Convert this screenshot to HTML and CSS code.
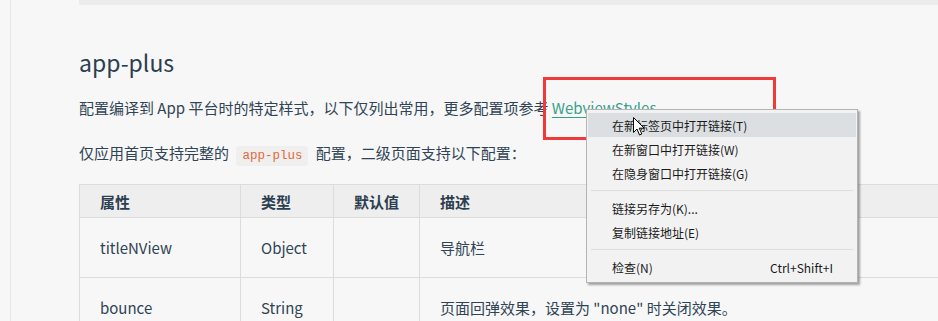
FILE: index.html
```html
<!DOCTYPE html>
<html>

<head>
  <meta charset="UTF-8">
  <meta name="viewport" content="width=device-width, initial-scale=1" />
  <title>app-plus</title>
  <link rel="stylesheet" href="styles.css">
</head>

<body>
  <div id="page">
    <aside id="sidebar"></aside>

    <main id="content">
      <div class="code-end"></div>

      <h2>app-plus</h2>

      <p>
        配置编译到 App 平台时的特定样式，以下仅列出常用，更多配置项参考
        <a href="#">WebviewStyles</a>。
      </p>

      <p>
        仅应用首页支持完整的 <code>app-plus</code> 配置，二级页面支持以下配置：
      </p>

      <table>
        <thead>
          <tr>
            <th class="col-name">属性</th>
            <th class="col-type">类型</th>
            <th class="col-default">默认值</th>
            <th>描述</th>
          </tr>
        </thead>
        <tbody>
          <tr>
            <td>titleNView</td>
            <td>Object</td>
            <td></td>
            <td>导航栏</td>
          </tr>
          <tr>
            <td>bounce</td>
            <td>String</td>
            <td></td>
            <td>页面回弹效果，设置为 "none" 时关闭效果。</td>
          </tr>
        </tbody>
      </table>
    </main>
  </div>

  <!-- highlight box drawn over the link -->
  <div id="highlight"></div>

  <!-- browser context menu -->
  <ul id="context-menu">
    <li class="hover">在新标签页中打开链接(T)</li>
    <li>在新窗口中打开链接(W)</li>
    <li>在隐身窗口中打开链接(G)</li>
    <li class="separator"></li>
    <li>链接另存为(K)...</li>
    <li>复制链接地址(E)</li>
    <li class="separator"></li>
    <li><span>检查(N)</span><span class="shortcut">Ctrl+Shift+I</span></li>
  </ul>

  <svg id="cursor" viewBox="0 0 12 19" xmlns="http://www.w3.org/2000/svg">
    <path d="M0.5,0.5 L0.5,15.5 L4,12 L6.5,18 L8.8,17 L6.3,11.2 L11.2,11.2 Z"
      fill="#fff" stroke="#000" stroke-width="1" stroke-linejoin="round" />
  </svg>
</body>

</html>
```

FILE: styles.css
```css
:root {
  --color-bg: #f7f7f7;
  --color-text: #304455;
  --color-heading: #2c3e50;
  --color-link: #3a9f8a;
  --color-code: #e4683a;
  --color-border: #dcdcdc;
  --color-th-bg: #eeeeee;
  --color-menu-bg: #f2f2f2;
  --color-menu-hover: #dcdfe1;
  --color-red: #f03a3a;
}

* {
  margin: 0;
  padding: 0;
  box-sizing: border-box;
}

html,
body {
  height: 100%;
}

body {
  overflow: hidden;
  background-color: var(--color-bg);
  color: var(--color-text);
  font-family: "Noto Sans CJK SC", "Noto Sans", sans-serif;
}

#page {
  display: flex;
  height: 100%;
}

#sidebar {
  flex-shrink: 0;
  width: 11px;
  border-right: 1px solid #e6e6e6;
}

#content {
  flex-shrink: 0;
  width: 960px;
  padding-left: 68px;

  .code-end {
    height: 5px;
    background-color: #ececec;
  }

  h2 {
    margin-top: 42px;
    font-size: 23px;
    line-height: 30px;
    font-weight: 400;
    color: var(--color-heading);
  }

  p {
    margin-top: 19px;
    font-size: 15px;
    line-height: 24px;

    &+p {
      margin-top: 21px;
    }
  }

  a {
    color: var(--color-link);
    text-decoration: underline;
    text-underline-offset: 3px;
  }

  code {
    margin: 0 4px;
    padding: 3px 6px;
    border-radius: 3px;
    background-color: #efefef;
    color: var(--color-code);
    font-family: "Liberation Mono", monospace;
    font-size: 12.5px;
  }
}

table {
  margin-top: 16px;
  width: 900px;
  border-collapse: collapse;
  font-size: 15px;

  th,
  td {
    padding: 0 20px;
    border: 1px solid var(--color-border);
    text-align: left;
  }

  th {
    height: 33px;
    background-color: var(--color-th-bg);
    font-weight: 700;
    color: var(--color-heading);
  }

  td {
    height: 60px;
  }

  .col-name {
    width: 161px;
  }

  .col-type {
    width: 93px;
  }

  .col-default {
    width: 86px;
  }
}

#highlight {
  position: absolute;
  top: 77px;
  left: 543px;
  width: 233px;
  height: 63px;
  border: 3px solid var(--color-red);
}

#context-menu {
  position: absolute;
  top: 109px;
  left: 586px;
  width: 272px;
  padding: 3px 1px;
  list-style: none;
  background-color: var(--color-menu-bg);
  border: 1px solid #b4b4b4;
  box-shadow: 2px 2px 2px rgba(0, 0, 0, 0.35);
  font-size: 12px;
  color: #1a1a1a;

  li {
    height: 24px;
    padding: 0 23px 0 24px;

    display: flex;
    align-items: center;
    justify-content: space-between;
  }

  li.hover {
    background-color: var(--color-menu-hover);
  }

  li.separator {
    height: 1px;
    margin: 5px 3px;
    padding: 0;
    background-color: #dedede;
  }
}

#cursor {
  position: absolute;
  top: 117px;
  left: 633px;
  width: 12px;
  height: 19px;
}
```
